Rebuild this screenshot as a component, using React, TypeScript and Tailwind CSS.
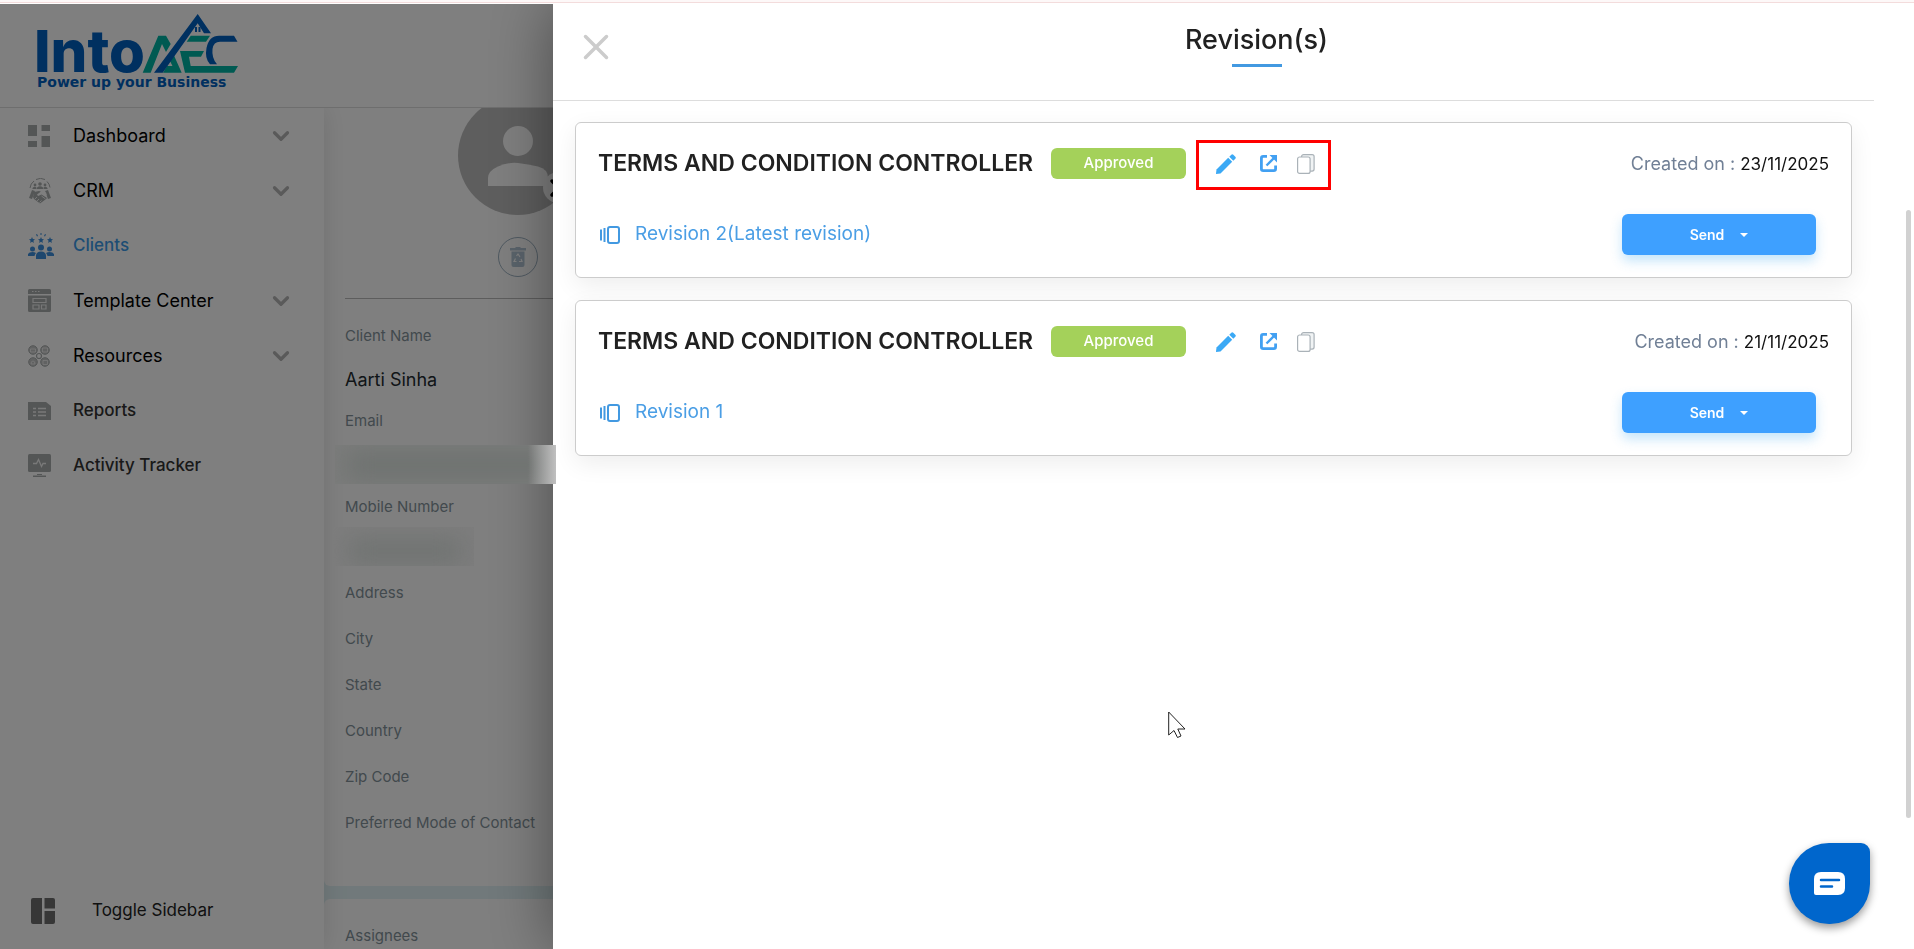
import React from 'react';
import { ChevronDown, X } from 'lucide-react';

interface NavItem {
  label: string;
  icon: React.ReactNode;
  expandable?: boolean;
  active?: boolean;
  strong?: boolean;
}

interface Revision {
  label: string;
  createdOn: string;
  highlighted?: boolean;
}

const DashboardIcon = () => (
  <svg viewBox="0 0 22 22" className="size-[22px]" fill="currentColor">
    <path d="M0 0h9v11H0zM13.500 0H22v6h-8.500zM0 16h9v6H0zM13.500 11H22v11h-8.500z" />
  </svg>
);

const CrmIcon = () => (
  <svg viewBox="0 0 24 26" className="h-[26px] w-6" fill="none" stroke="currentColor">
    <path d="M2 10A10 10 0 0 1 6 3M8 1.500a10 10 0 0 1 9 0M19 3.500a10 10 0 0 1 3 6" strokeWidth="1" />
    <g fill="currentColor" stroke="none">
      <circle cx="12" cy="6" r="1.800" />
      <circle cx="7" cy="7" r="1.400" />
      <circle cx="17" cy="7" r="1.400" />
      <path d="M9 11V9.500q3-2.500 6 0V11zM4.500 11V10q2-2 4-.5V11zM15.500 11V9.500q2-1.500 4 .5v1z" />
      <path d="M1 20 4 12l3 1-3 8zM23 20l-3-8-3 1 3 8z" />
      <path d="m6 14 5-1 2 .5-4 3 1 1.500 3.500-1.500L19 20l-1.500 1.500L14 24l-2 1.500L6 21l-1-2z" />
    </g>
    <path d="m12.500 14 5 .2 1 3M7 21l2-2M9 23l2-2M11.500 24.500l2-2M13.500 18l4 3" stroke="#fff" strokeWidth=".8" />
  </svg>
);

const star = 'm0-3 .9 2 2.100.2-1.600 1.500.5 2.200L0 1.800l-1.900 1.100.5-2.200L-3-.8l2.100-.2z';

const ClientsIcon = () => (
  <svg viewBox="0 0 26 26" className="size-[26px]" fill="currentColor">
    <path d={star} transform="translate(4 7)" />
    <path d={star} transform="translate(13 7)" />
    <path d={star} transform="translate(22 7)" />
    <path d="M12.500 0h1v2h-1zM8 1.500l1-.5 1 2-1 .5zM18 1.500 17 1l-1 2 1 .5z" />
    <circle cx="4.500" cy="16" r="2.500" />
    <circle cx="21.500" cy="16" r="2.500" />
    <circle cx="13" cy="14.500" r="3" />
    <path d="M0 23v-2q1-2 4.500-2 2 0 3.500 1-1 1-1.500 3zM26 23v-2q-1-2-4.500-2-2 0-3.500 1 1 1 1.500 3zM8 26v-3q0-4.500 5-4.500t5 4.500v3z" />
  </svg>
);

const TemplateIcon = () => (
  <svg viewBox="0 0 23 23" className="size-[23px]">
    <path d="M1.500 0h20q1.500 0 1.500 1.500V5H0V1.500Q0 0 1.500 0zM0 6.500h23v15q0 1.500-1.500 1.500h-20Q0 23 0 21.500z" fill="currentColor" />
    <path d="M4 2.500h1.500M7 2.500h1.500M10 2.500h1.500M5 9.500h13v4H5zM5 16h6v4H5zM13.500 16H18v4h-4.500z" fill="none" stroke="#fff" strokeOpacity=".8" strokeWidth="1.200" />
  </svg>
);

const ResourcesIcon = () => (
  <svg viewBox="0 0 22 22" className="size-[22px]" fill="none" stroke="currentColor">
    <g fill="currentColor" fillOpacity=".7">
      <circle cx="5" cy="5" r="4.300" />
      <circle cx="17" cy="5" r="4.300" />
      <circle cx="5" cy="17" r="4.300" />
      <circle cx="17" cy="17" r="4.300" />
    </g>
    <circle cx="11" cy="11" r="2.500" strokeWidth="1.200" />
    <path d="M2.500 4h5v3h-5zM14.500 3h5v4h-5zM3 19q0-3 2-3t2 3zM15 15.500h4.500v4H15z" stroke="#fff" strokeOpacity=".7" strokeWidth=".9" />
  </svg>
);

const ReportsIcon = () => (
  <svg viewBox="0 0 23 18" className="h-[18px] w-[23px]">
    <path d="M0 0h18l5 4v14H0z" fill="currentColor" />
    <path d="M5 6.500h3M5 10h3M5 13.500h3M10 6.500h8M10 10h8M10 13.500h8" stroke="#fff" strokeOpacity=".85" strokeWidth="1.400" />
  </svg>
);

const ActivityIcon = () => (
  <svg viewBox="0 0 23 23" className="size-[23px]">
    <rect width="23" height="18" rx="1.500" fill="currentColor" />
    <path d="M9 20h5v1H9zM5 21.500h13V23H5z" fill="currentColor" />
    <path d="M5 9.500h3.500l2-4 3 7 1.500-3h3" fill="none" stroke="#fff" strokeOpacity=".85" strokeWidth="1.300" />
  </svg>
);

const Logo = () => (
  <svg viewBox="0 0 202 76" className="h-[76px] w-[202px] overflow-visible" role="img" aria-label="IntoAEC">
    <text x="-3" y="59" fontFamily="Inter, sans-serif" fontWeight="800" fontSize="58" fill="#0060c0">Into</text>
    <g fill="#00b5a5">
      <path d="M105.700 59.700 121.300 22.700H129l4.700 8.300-4.700 8-4-8-11.300 28.700z" />
      <path d="m136 40.300 8.700 19.400H126l4-6.700h5.500l-3.500-7z" />
      <path d="M153.700 22.700H173l-4 6h-19.300z" />
      <path d="M143 38h24l-3 5.700h-12l1.700 9.300H201l-4 6.700h-49z" />
    </g>
    <g fill="#0060c0">
      <path d="M117 59.700 160.700 1 174 20.300h-7l-6.300-10L125.700 59.700z" />
      <path d="M200.500 28.700H183q-6.500 0-7.500 7.300-1 9 4.500 15.300h-7q-5.500-6-3.500-16.300 2.500-12.300 12.500-12.300h15z" />
      <path d="M158 14h2v5h-2zM161.500 14h2v5h-2z" />
    </g>
    <text x="0" y="74" fontFamily="'DejaVu Sans', sans-serif" fontWeight="700" fontSize="14" fill="#0060c0">Power up your Business</text>
  </svg>
);

const ToggleIcon = () => (
  <svg viewBox="0 0 24 26" className="h-[26px] w-6" fill="currentColor">
    <path d="M2 0h9v26H2q-2 0-2-2V2q0-2 2-2zM13.500 0H22q2 0 2 2v8.500H13.500zM13.500 13H24v11q0 2-2 2h-8.500z" />
  </svg>
);

const PencilIcon = () => (
  <svg viewBox="0 0 20 20" className="size-5" fill="#3ba9f5">
    <path d="M0 19.500 .5 15.500 12.200 3.800l4 4L4.500 19.500 0 20z" />
    <path d="m13.300 2.700 2-2q1-1 2 0l2 2q1 1 0 2l-2 2z" />
  </svg>
);

const OpenIcon = () => (
  <svg viewBox="0 0 17 17" className="size-[17px]" fill="none" stroke="#42a0f2" strokeWidth="2.800">
    <path d="M7 1.400H3.200q-1.800 0-1.800 1.800v10.600q0 1.800 1.800 1.800h10.600q1.800 0 1.800-1.800V10.500" />
    <path d="M14 3 6.500 10.500" strokeWidth="2.400" />
    <path d="M9.500 0H17v7.500z" fill="#42a0f2" stroke="none" />
  </svg>
);

const CopyIcon = () => (
  <svg viewBox="0 0 18 20" className="h-5 w-[18px]" fill="#f0f3f4" stroke="#aab2b8" strokeWidth="1.200">
    <rect x="4.600" y=".6" width="12.500" height="16.500" rx="2" />
    <rect x=".6" y="3" width="12.500" height="16.400" rx="2" fill="#fff" />
  </svg>
);

const RevisionIcon = () => (
  <svg viewBox="0 0 20 18" className="h-[18px] w-5" fill="none" stroke="#4299e1" strokeWidth="2">
    <rect x="8" y="1" width="11" height="16" rx="2" />
    <path d="M4.500 2v14" />
    <path d="M1 3.500v11" />
  </svg>
);

const TrashIcon = () => (
  <svg viewBox="0 0 16 20" className="h-5 w-4">
    <path d="M0 1h5l1-1h4l1 1h5v2.500H0zM1.500 4.500h13V18q0 2-2 2h-9q-2 0-2-2z" fill="#b4c6d6" />
    <path d="m6.500 9 1.500-2 2 3M11 12l1 2.500H9M6.500 14.500H4l1.500-3" fill="none" stroke="#fff" strokeWidth="1.200" />
  </svg>
);

const navItems: NavItem[] = [
  { label: 'Dashboard', icon: <DashboardIcon />, expandable: true },
  { label: 'CRM', icon: <CrmIcon />, expandable: true },
  { label: 'Clients', icon: <ClientsIcon />, active: true },
  { label: 'Template Center', icon: <TemplateIcon />, expandable: true },
  { label: 'Resources', icon: <ResourcesIcon />, expandable: true },
  { label: 'Reports', icon: <ReportsIcon />, strong: true },
  { label: 'Activity Tracker', icon: <ActivityIcon />, strong: true },
];

const emptyFields = ['Address', 'City', 'State', 'Country', 'Zip Code', 'Preferred Mode of Contact'];

const revisions: Revision[] = [
  { label: 'Revision 2(Latest revision)', createdOn: '23/11/2025', highlighted: true },
  { label: 'Revision 1', createdOn: '21/11/2025' },
];

const Sidebar = () => (
  <aside className="relative z-10 flex w-[324px] shrink-0 flex-col justify-between bg-white shadow-[0_0_24px_rgba(0,0,0,0.12)]">
    <nav>
      {navItems.map((item) => (
        <a
          key={item.label}
          href="#"
          className={`flex h-[55px] items-center pl-7 pr-[30px] ${
            item.active
              ? 'text-[17px] font-medium text-[#3d9be9]'
              : item.strong
                ? 'text-[17px] font-medium text-[#333]'
                : 'text-[18px] text-black'
          }`}
        >
          <span className={`w-[45px] ${item.active ? 'text-[#3d8fdc]' : 'text-[#a9adad]'}`}>{item.icon}</span>
          <span className="flex-1">{item.label}</span>
          {item.expandable && <ChevronDown className="size-[26px] text-[#b4b4b4]" strokeWidth={3} />}
        </a>
      ))}
    </nav>
    <button className="mb-[11px] flex h-[55px] items-center pl-[31px] text-[17px] text-[#222]">
      <span className="w-[61px] text-[#6e6e6e]"><ToggleIcon /></span>
      Toggle Sidebar
    </button>
  </aside>
);

const ClientPanel = () => (
  <main className="flex flex-1 flex-col gap-[13px] bg-[#e2f3f6] text-[15px] text-[#84939b]">
    <section className="h-[778px] rounded-b-md bg-white pl-[21px]">
      <div className="w-[345px]">
        <div className="flex h-[191px] flex-col items-center border-b border-[#bbb]">
          <div className="relative -mt-3">
            <div className="flex size-[119px] items-center justify-center rounded-full bg-[#bdbdbd] text-white">
              <svg viewBox="0 0 60 60" className="size-[60px]" fill="currentColor">
                <circle cx="30" cy="15" r="15" />
                <path d="M0 60v-8q0-7 10-11.500T30 37t20 3.500T60 52v8z" />
              </svg>
            </div>
            <button aria-label="Remove photo" className="absolute bottom-3 left-[85px] flex size-[31px] items-center justify-center rounded-full bg-white text-black">
              <X className="size-7" strokeWidth={3} />
            </button>
          </div>
          <button aria-label="Delete client" className="mt-[22px] flex size-10 items-center justify-center rounded-full border border-[#9fb3c3]">
            <TrashIcon />
          </button>
        </div>
        <p className="mt-[27px] leading-5">Client Name</p>
        <p className="mt-6 text-[18px] leading-5 text-[#222b30]">Aarti Sinha</p>
        <p className="mt-[21px] leading-5">Email</p>
        {/* Masked values stay above the backdrop */}
        <div className="relative z-50 -ml-2.5 mt-[14px] flex h-[39px] w-[221px] items-center overflow-hidden bg-[#7b7c7b]">
          <div className="ml-3 h-6 w-[210px] bg-[#6d716f] blur-md" />
          <div className="absolute inset-y-0 right-0 w-7 bg-linear-to-r from-transparent to-[#c0c0c0]" />
        </div>
        <p className="mt-[13px] leading-5">Mobile Number</p>
        <div className="relative z-50 -ml-3 mt-2.5 flex h-[39px] w-[141px] items-center overflow-hidden bg-[#7d7d7d]">
          <div className="ml-4 mt-2 h-5 w-[112px] bg-[#6d716f] blur-md" />
        </div>
        <div className="mt-1">
          {emptyFields.map((field) => (
            <p key={field} className="flex h-[46px] items-center">{field}</p>
          ))}
        </div>
      </div>
    </section>
    <section className="flex-1 rounded-t-md bg-white pl-[21px] pt-[27px]">
      <p className="leading-5">Assignees</p>
    </section>
  </main>
);

const RevisionCard = ({ revision }: { revision: Revision }) => (
  <article className="rounded-md border border-[#ccc] bg-white px-[22px] pb-[22px] pt-[25px] shadow-[0_8px_24px_rgba(0,0,0,0.07)]">
    <div className="flex h-[31px] items-center">
      <h2 className="w-[453px] text-[23px] font-semibold text-[#212121]">TERMS AND CONDITION CONTROLLER</h2>
      <span className="flex h-[31px] w-[135px] items-center justify-center rounded-md bg-[#a4d15a] text-[15px] font-medium text-white">
        Approved
      </span>
      <div className="relative ml-[30px] flex items-center">
        <button aria-label="Edit"><PencilIcon /></button>
        <button aria-label="Open in new tab" className="ml-6"><OpenIcon /></button>
        <button aria-label="Copy" className="ml-5"><CopyIcon /></button>
        {revision.highlighted && (
          <span className="pointer-events-none absolute -bottom-4 -left-5 -right-4 -top-[14px] border-3 border-[#f00]" />
        )}
      </div>
      <p className="ml-auto text-[18px] text-[#718096]">
        Created on : <time className="text-[17px] text-[#111]">{revision.createdOn}</time>
      </p>
    </div>
    <div className="mt-[35px] flex h-[41px] items-center">
      <span className="flex w-[37px] pl-0.5"><RevisionIcon /></span>
      <a href="#" className="text-[19px] text-[#4a9ee5]">{revision.label}</a>
      <button className="ml-auto mr-[13px] flex h-[41px] w-[194px] items-center justify-center gap-4 rounded-md bg-[#3ea0ff] text-[14px] font-semibold text-white shadow-[0_6px_12px_rgba(62,170,240,0.3)]">
        Send
        <svg viewBox="0 0 8 4" className="h-1 w-2" fill="currentColor"><path d="M0 0h8L4 4z" /></svg>
      </button>
    </div>
  </article>
);

const RevisionDrawer = () => (
  <section role="dialog" aria-label="Revision(s)" className="relative flex-1 bg-white pr-10 shadow-[0_0_60px_rgba(0,0,0,0.42)]">
    <header className="flex h-[97px] items-start border-b border-[#ddd]">
      <button aria-label="Close" className="flex w-[86px] justify-center pt-[22px] text-[#ccc]">
        <X className="size-[42px]" strokeWidth={2} />
      </button>
      <div className="flex flex-1 flex-col items-center pt-4">
        <h1 className="text-[27px] font-medium leading-10 text-[#212121]">Revision(s)</h1>
        <span className="mt-1 h-[3px] w-[50px] bg-[#4299e1]" />
      </div>
    </header>
    <div className="flex flex-col gap-[22px] px-[22px] pt-[21px]">
      {revisions.map((revision) => (
        <RevisionCard key={revision.label} revision={revision} />
      ))}
    </div>
    <span className="absolute right-[3px] top-[206px] h-[608px] w-[5px] rounded-full bg-[#d1d1d1]" />
  </section>
);

export default function App() {
  return (
    <div className="flex h-screen flex-col overflow-hidden bg-white font-[Inter,'Open_Sans',sans-serif]">
      <div className="mb-px h-[3px] shrink-0 border-b border-[#f3dcdc] bg-[#fdf8f8]" />
      <header className="relative z-20 h-[104px] shrink-0 border-b border-[#ddd] bg-white pl-[37px] pt-[9px]">
        <Logo />
      </header>
      <div className="flex min-h-0 flex-1 overflow-hidden">
        <Sidebar />
        <ClientPanel />
      </div>

      <div className="fixed inset-x-0 bottom-0 top-1 z-40 flex overflow-hidden bg-black/50">
        <div className="w-[553px] shrink-0" />
        <RevisionDrawer />
      </div>

      <button
        aria-label="Open chat"
        className="fixed bottom-[25px] right-11 z-50 flex size-[81px] items-center justify-center rounded-[40px] rounded-tr-[9px] bg-[#0066cc] shadow-[0_4px_8px_rgba(0,0,0,0.4)]"
      >
        <svg viewBox="0 0 31 23" className="h-[23px] w-[31px]">
          <path d="M7 0h17q7 0 7 7v9q0 7-7 7H2q-2 0-2-2V7q0-7 7-7z" fill="#fff" />
          <path d="M7 8h18M7 14.500h11" stroke="#0066cc" strokeWidth="2.500" strokeLinecap="round" />
        </svg>
      </button>
      <svg viewBox="0 0 18 28" className="pointer-events-none fixed left-[1168px] top-[711px] z-50 h-7 w-[18px]">
        <path d="M.7 1v23l5.300-4.500 3.500 7 3.500-1.500-3.200-7h7.200z" fill="#fff" stroke="#222" strokeWidth="1" />
      </svg>
    </div>
  );
}
